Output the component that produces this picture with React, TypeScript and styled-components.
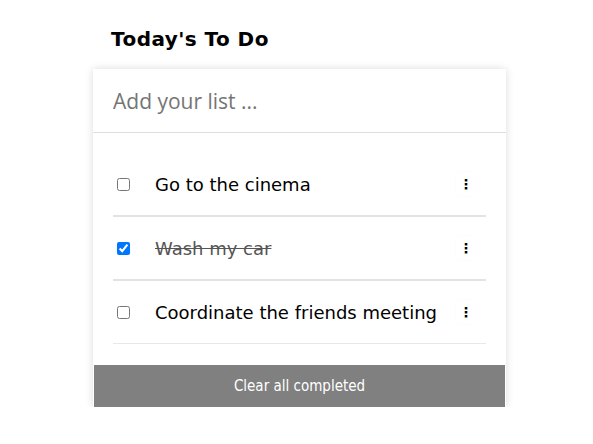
import React, { useState } from 'react';
import styled, { createGlobalStyle } from 'styled-components';

const GlobalStyle = createGlobalStyle`
  body {
    margin: 0;
    background: #fff;
    font-family: "DejaVu Sans", Verdana, sans-serif;
  }
`;

const Page = styled.div`
  width: 413px;
  margin-left: 93px;
  padding-top: 25px;
`;

const Title = styled.h1`
  margin: 0 0 16px 18px;
  font-family: "DejaVu Sans", Verdana, sans-serif;
  font-size: 20px;
  letter-spacing: 0.45px;
  line-height: 28px;
  font-weight: bold;
  color: #000;
`;

const Card = styled.div`
  background: #fff;
  box-shadow: 0 0 8px rgba(0, 0, 0, 0.14);
  display: flex;
  flex-direction: column;
`;

const AddInput = styled.input`
  box-sizing: border-box;
  height: 64px;
  border: none;
  border-bottom: 1px solid #dedede;
  padding: 0 20px;
  font-family: "Open Sans", sans-serif;
  font-size: 21px;
  color: #222;
  outline: none;

  &::placeholder {
    color: #757575;
  }
`;

const List = styled.ul`
  list-style: none;
  margin: 0;
  padding: 20px 20px 21px;
`;

const Row = styled.li<{ $last?: boolean }>`
  display: flex;
  align-items: center;
  height: 62px;
  border-bottom: ${p => (p.$last ? '1px solid #e8e8e8' : '2px solid #e2e2e2')};
`;

const Check = styled.input`
  width: 13px;
  height: 13px;
  margin: 0 25px 0 4px;
  accent-color: #0075ff;
`;

const Label = styled.span<{ $done: boolean }>`
  flex: 1;
  font-size: 18px;
  color: ${p => (p.$done ? '#555' : '#000')};
  text-decoration: ${p => (p.$done ? 'line-through' : 'none')};
`;

const MenuButton = styled.button`
  width: 20px;
  height: 24px;
  margin-right: 10px;
  padding: 0;
  border: none;
  background: #fff;
  box-shadow: 0 0 3px rgba(0, 0, 0, 0.03);
  border-radius: 4px;
  font-family: "DejaVu Sans", sans-serif;
  font-size: 14px;
  font-weight: bold;
  color: #000;
  cursor: pointer;
`;

const ClearButton = styled.button`
  height: 42px;
  margin: 0 1px;
  border: none;
  background: #808080;
  color: #fff;
  font-family: "DejaVu Sans Condensed", Tahoma, sans-serif;
  font-size: 15px;
  cursor: pointer;
`;

type Todo = { id: number; text: string; done: boolean };

const initial: Todo[] = [
  { id: 1, text: 'Go to the cinema', done: false },
  { id: 2, text: 'Wash my car', done: true },
  { id: 3, text: 'Coordinate the friends meeting', done: false },
];

export default function App() {
  const [todos, setTodos] = useState<Todo[]>(initial);

  const toggle = (id: number) =>
    setTodos(todos.map(t => (t.id === id ? { ...t, done: !t.done } : t)));

  return (
    <>
      <GlobalStyle />
      <Page>
        <Title>Today's To Do</Title>
        <Card>
          <AddInput placeholder="Add your list ..." />
          <List>
            {todos.map((t, i) => (
              <Row key={t.id} $last={i === todos.length - 1}>
                <Check type="checkbox" checked={t.done} onChange={() => toggle(t.id)} />
                <Label $done={t.done}>{t.text}</Label>
                <MenuButton>⋮</MenuButton>
              </Row>
            ))}
          </List>
          <ClearButton onClick={() => setTodos(todos.filter(t => !t.done))}>
            Clear all completed
          </ClearButton>
        </Card>
      </Page>
    </>
  );
}
